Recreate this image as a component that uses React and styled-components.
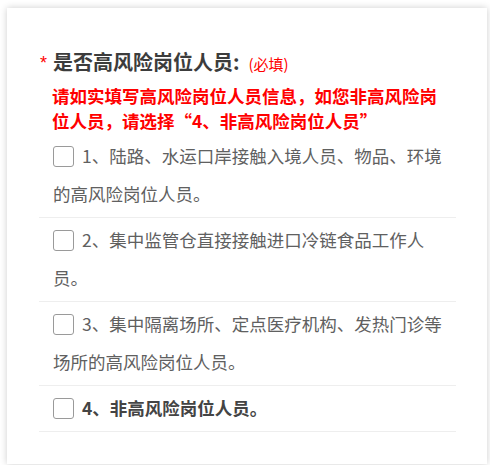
import React from "react";
import styled, { createGlobalStyle } from "styled-components";

const Global = createGlobalStyle`
  html, body { margin: 0; padding: 0; background: #fff; }
  body { font-family: "Noto Sans CJK SC", "Noto Sans", sans-serif; }
  * { box-sizing: border-box; }
`;

const Page = styled.div`
  padding: 8px 3px 1px 7px;
`;

const Card = styled.div`
  background: #fff;
  height: 456px;
  box-shadow: 0 0 7px rgba(0, 0, 0, 0.2);
  padding: 40px 31px 0 32px;
`;

const Label = styled.div`
  display: flex;
  align-items: baseline;
  line-height: 28px;
`;

const Star = styled.span`
  width: 14px;
  padding-left: 1px;
  color: #f00;
  font-size: 18px;
  font-family: "Liberation Sans", sans-serif;
  align-self: flex-start;
  line-height: 30px;
`;

const Title = styled.span`
  font-size: 20px;
  font-weight: 700;
  color: #3c3c3c;
`;

const Required = styled.span`
  margin-left: 9px;
  font-size: 15px;
  color: #f00;
`;

const Note = styled.div`
  margin: 5px 0 1px;
  padding-left: 13px;
  font-size: 17.5px;
  line-height: 25px;
  font-weight: 700;
  color: #f00;
  padding-right: 8px;
`;

const Options = styled.div``;

const Option = styled.label`
  display: block;
  padding: 3px 0 4px 14px;
  border-bottom: 1px solid #eeeeee;
  font-size: 17.5px;
  line-height: 38px;
  color: ${(p) => (p.$strong ? "#444" : "#606060")};
  font-weight: ${(p) => (p.$strong ? 700 : 400)};
  cursor: pointer;
`;

const Box = styled.span`
  display: inline-block;
  width: 21px;
  height: 21px;
  border: 1px solid #9a9a9a;
  border-radius: 3px;
  background: #fff;
  vertical-align: middle;
  margin: -3px 8px 0 0;
`;

const items = [
  { text: "1、陆路、水运口岸接触入境人员、物品、环境的高风险岗位人员。" },
  { text: "2、集中监管仓直接接触进口冷链食品工作人员。" },
  { text: "3、集中隔离场所、定点医疗机构、发热门诊等场所的高风险岗位人员。" },
  { text: "4、非高风险岗位人员。", strong: true },
];

export default function App() {
  return (
    <>
      <Global />
      <Page>
        <Card>
          <Label>
            <Star>*</Star>
            <Title>是否高风险岗位人员:</Title>
            <Required>(必填)</Required>
          </Label>
          <Note>请如实填写高风险岗位人员信息，如您非高风险岗位人员，请选择“4、非高风险岗位人员”</Note>
          <Options>
            {items.map((it, i) => (
              <Option key={i} $strong={it.strong}>
                <Box />
                {it.text}
              </Option>
            ))}
          </Options>
        </Card>
      </Page>
    </>
  );
}
